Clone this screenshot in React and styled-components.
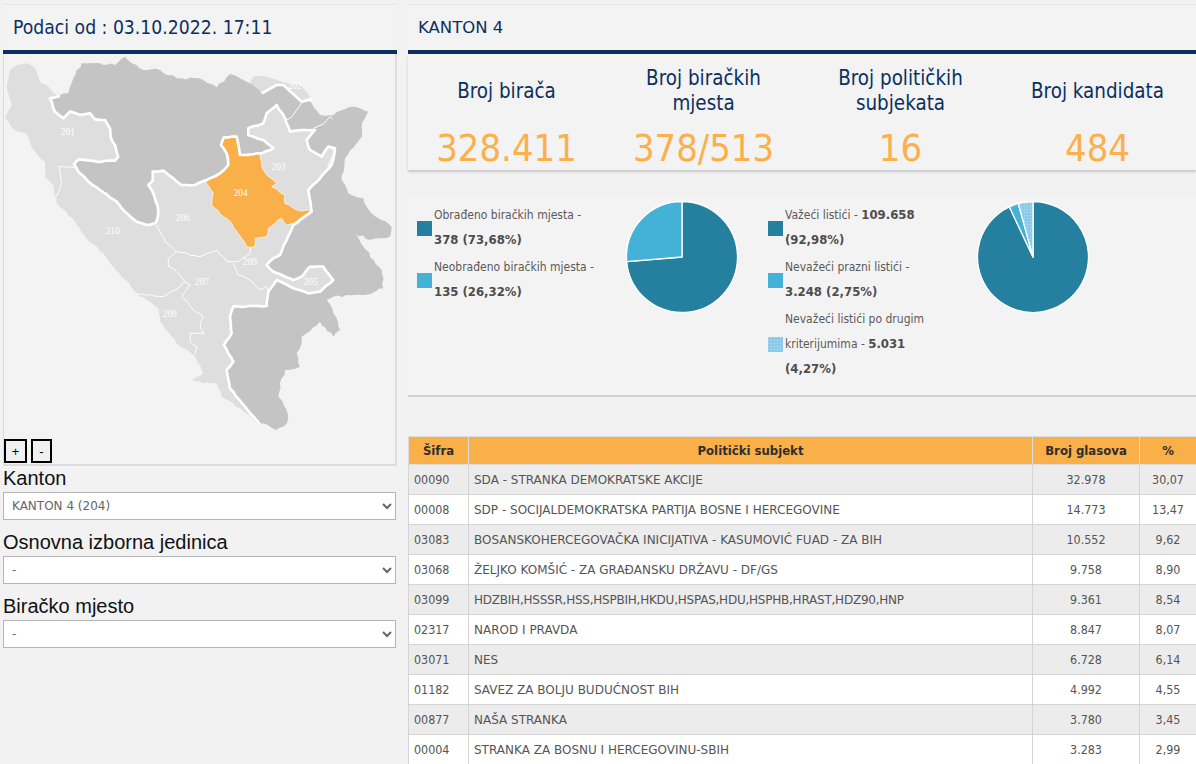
import React from "react";
import styled, { createGlobalStyle } from "styled-components";

const NAVY = "#0b3060";
const ORANGE = "#f9b048";
const TEAL = "#24809e";
const BLUE = "#44b2d6";
const SKY = "#8ccaea";

const GlobalStyle = createGlobalStyle`
  html, body {
    margin: 0;
    padding: 0;
    height: 764px;
    overflow: hidden;
    background: #f2f2f2;
  }
  * { box-sizing: border-box; }
`;

const Page = styled.div`
  display: flex;
  gap: 11px;
  padding: 4px 0 0 3px;
  width: 1196px;
  height: 764px;
  overflow: hidden;
  font-family: "DejaVu Sans", sans-serif;
  font-stretch: condensed;
`;

const LeftColumn = styled.div`
  width: 394px;
  flex: none;
`;

const RightColumn = styled.div`
  width: 788px;
  flex: none;
`;

const TitleBar = styled.div`
  height: 50px;
  display: flex;
  align-items: center;
  padding: 0 ${(p) => p.$pad}px 1px;
  background: #f3f3f3;
  border-top: 1px solid #e6e6e6;
  border-bottom: 4px solid ${NAVY};
  color: ${NAVY};
  font-size: ${(p) => p.$size}px;
  font-stretch: ${(p) => (p.$wide ? "normal" : "condensed")};
`;

const MapPanel = styled.div`
  position: relative;
  height: 412px;
  background: #f3f3f3;
  border: 1px solid #dcdcdc;
  border-width: 0 2px 2px 1px;
`;

const MapSvg = styled.svg`
  display: block;
  width: 391px;
  height: 410px;
`;

const RegionLabel = styled.text`
  font-family: "Liberation Serif", serif;
  font-size: 28px;
  fill: #fff;
  text-anchor: middle;
`;

const ZoomButtons = styled.div`
  position: absolute;
  left: 0;
  bottom: 1px;
  display: flex;
  gap: 4px;
`;

const ZoomButton = styled.button`
  width: ${(p) => p.$w}px;
  height: 24px;
  padding: 0;
  border: 2px solid #000;
  background: #f0f0f0;
  color: #000;
  font-family: "Liberation Sans", sans-serif;
  font-size: 13px;
`;

const FieldLabel = styled.label`
  display: block;
  height: ${(p) => (p.$first ? 26 : 36)}px;
  padding-top: ${(p) => (p.$first ? 0 : 10)}px;
  font-family: "Liberation Sans", sans-serif;
  font-size: 20px;
  line-height: 25px;
  font-stretch: normal;
  color: #111;
`;

const Select = styled.select`
  display: block;
  width: 393px;
  height: 28px;
  padding: 0 4px;
  background: #fff;
  border: 1px solid #b4b4b4;
  color: #666;
  font-family: inherit;
  font-stretch: normal;
  font-size: 12px;
`;

const StatsPanel = styled.div`
  height: 116px;
  display: grid;
  grid-template-columns: repeat(4, 1fr);
  background: #f3f3f3;
  box-shadow: 0 2px 2px #c8c8c8;
`;

const Stat = styled.div`
  display: flex;
  flex-direction: column;
  align-items: center;
`;

const StatLabel = styled.div`
  height: 66px;
  padding-top: 8px;
  display: flex;
  align-items: center;
  text-align: center;
  color: ${NAVY};
  font-size: 20.4px;
  line-height: 25px;
`;

const StatValue = styled.div`
  color: #fbb04c;
  font-size: 37.8px;
  line-height: 46px;
  margin-top: 5px;
`;

const ChartPanel = styled.div`
  margin-top: 23px;
  height: 204px;
  display: flex;
  padding: 9px 0 0 9px;
  background: #f3f3f3;
  border-top: 1px solid #ececec;
  border-bottom: 2px solid #d2d2d2;
`;

const ChartGroup = styled.div`
  width: 351px;
  flex: none;
  display: flex;
`;

const Legend = styled.div`
  width: 208px;
  flex: none;
`;

const LegendItem = styled.div`
  display: flex;
  align-items: center;
  gap: 2px;
  margin-bottom: 2px;
  color: #5a5a5a;
  font-size: 12px;
  line-height: 25px;

  b {
    color: #4d4d4d;
    font-size: 13px;
    line-height: 1;
  }
`;

const Swatch = styled.svg`
  width: 15px;
  height: 15px;
  flex: none;
`;

const PieSvg = styled.svg`
  width: 114px;
  height: 114px;
  flex: none;
  display: block;
  margin-top: -3px;
`;

const ResultsTable = styled.table`
  margin-top: 39px;
  width: 788px;
  table-layout: fixed;
  border-collapse: collapse;
`;

const HeadCell = styled.th`
  height: 28px;
  width: ${(p) => p.$w}px;
  padding: 0;
  background: ${ORANGE};
  border: 1px solid #dcdcdc;
  color: #2e2e2e;
  font-size: 13px;
  font-weight: bold;
  text-align: center;
`;

const Row = styled.tr`
  background: ${(p) => (p.$odd ? "#ececec" : "#fff")};
`;

const Cell = styled.td`
  height: 30px;
  padding: 0 5px;
  border: 1px solid #d4d4d4;
  color: #555;
  font-size: 12.4px;
  white-space: nowrap;
  overflow: hidden;
  text-align: ${(p) => (p.$center ? "center" : "left")};
`;

const NameCell = styled(Cell)`
  font-size: 12px;
  font-stretch: normal;
  letter-spacing: ${(p) => (p.$tight ? "-0.23px" : "0")};
`;

// map outlines are hand traced, roughen() gives them the jagged edge of the original
const roughen = (points, amp, seed = 7) => {
  let s = seed;
  const next = () => {
    s = (s * 9301 + 49297) % 233280;
    return s / 233280 - 0.5;
  };
  const pts = points.trim().split(/\s+/).map((p) => p.split(",").map(Number));
  const out = [];
  pts.forEach(([x, y], i) => {
    out.push(`${x},${y}`);
    if (i === pts.length - 1) return;
    const [nx, ny] = pts[i + 1];
    const len = Math.hypot(nx - x, ny - y);
    const steps = Math.floor(len / 12);
    for (let k = 1; k < steps; k++) {
      const t = k / steps;
      const off = next() * 2 * amp;
      const px = x + (nx - x) * t - ((ny - y) / len) * off;
      const py = y + (ny - y) * t + ((nx - x) / len) * off;
      out.push(`${px.toFixed(1)},${py.toFixed(1)}`);
    }
  });
  return out.join(" ");
};

const DARK = roughen("150,145 205,130 220,85 245,40 285,40 345,45 375,20 395,40 430,60 480,60 530,85 600,85 650,112 690,72 720,85 750,100 785,130 830,105 850,105 905,155 925,150 960,195 1000,195 1050,170 1105,185 1085,230 1085,260 1035,325 1025,390 1045,430 1090,445 1115,490 1175,530 1170,560 1110,570 1065,550 1090,590 1145,660 1150,715 1090,735 1000,740 980,750 1000,790 1020,840 1000,860 960,815 905,860 905,880 890,910 900,950 855,960 840,1000 835,1040 860,1080 865,1105 850,1130 828,1140 790,1120", 4);

const BORDER = roughen("780,1122 735,1070 690,1015 680,960 700,935 672,885 695,850 690,800 700,770 760,768 800,768 805,725 830,690 870,710 925,730 960,725 1000,690 970,650 930,650 905,680 880,690 820,665 800,645 820,625 840,615 860,570 880,525 935,485 925,420 960,385 995,345 1005,295 985,290 965,320 930,300 920,270 945,240 905,240 870,245 855,205 830,165 800,190 790,220 745,235 745,255 790,270 820,295 785,310 720,315 710,260 672,262 663,285 680,310 685,345 660,370 620,390 585,405 545,405 520,385 490,362 458,365 458,392 445,405 455,420 472,465 475,490 468,518 440,525 410,515 375,485 350,455 300,420 265,395 235,365 222,342 235,328 290,335 345,332 355,320 345,285 332,262 330,235 315,210 285,208 270,190 240,195 210,185 190,205 165,185 150,145 180,138", 1.5);

const LIGHT = roughen("30,60 50,45 80,40 105,55 120,95 150,115 170,135 205,130 300,200 600,300 700,200 760,80 790,78 830,90 860,100 900,105 930,140 905,155 1000,300 940,480 1000,690 960,730 800,780 780,1125 720,1075 665,1040 650,1000 610,1000 575,990 610,970 580,915 530,880 480,815 475,775 440,750 410,730 340,650 310,610 260,565 225,515 170,460 160,405 135,380 135,335 100,300 80,250 45,240 15,205 35,160 20,110", 3);

const BRCKO = "760,80 790,78 830,90 860,100 900,105 930,140 905,155 850,105 830,105 785,130";
const BRCKO_BORDER = "785,130 830,105 850,105 905,155 935,148";

const CANTON = roughen("615,392 660,370 685,345 680,310 663,285 672,262 710,260 720,315 780,310 785,350 800,375 830,400 815,410 855,435 855,460 890,480 935,483 880,520 860,525 845,505 825,520 805,535 800,560 765,565 765,590 740,590 725,565 695,520 670,500 635,465 640,430", 2.5);

const THIN_LINES = [
  "222,352 175,350 185,400 168,440",
  "470,525 495,575 530,605 600,620 650,600 680,635 715,635 750,610 752,590",
  "530,605 505,625 505,650 530,665 555,695 525,720 490,740 440,735 410,732",
  "555,695 570,705 545,740 585,785 610,800 600,830 612,850 570,850 570,875 590,890 585,915",
  "700,640 715,675 750,690 780,720 800,710 805,725",
  "905,158 880,195 860,210",
  "940,235 970,222 990,200 998,207",
].map((line) => roughen(line, 2.5));

const LABELS = [
  ["201", 204, 254], ["202", 884, 118], ["203", 836, 359], ["204", 722, 437],
  ["205", 932, 704], ["206", 549, 512], ["207", 606, 704], ["208", 510, 800],
  ["209", 750, 646], ["210", 338, 551],
];

const Map = () => (
  <MapSvg viewBox="12 12 1173 1230" aria-label="Mapa">
    <polygon points={LIGHT} fill="#dedede" />
    <polygon points={`${DARK} ${BORDER}`} fill="#c4c4c4" />
    <polygon points={BRCKO} fill="#dedede" />
    {THIN_LINES.map((pts) => (
      <polyline key={pts} points={pts} fill="none" stroke="#fff" strokeWidth="3" />
    ))}
    <polygon points={CANTON} fill={ORANGE} stroke="#fff" strokeWidth="2" />
    <polyline points={BORDER} fill="none" stroke="#fff" strokeWidth="8" strokeLinejoin="round" />
    <polyline points={BRCKO_BORDER} fill="none" stroke="#fff" strokeWidth="8" strokeLinejoin="round" />
    {LABELS.map(([text, x, y]) => (
      <RegionLabel key={text} x={x} y={y}>{text}</RegionLabel>
    ))}
  </MapSvg>
);

const DotPattern = ({ id }) => (
  <pattern id={id} width="3" height="3" patternUnits="userSpaceOnUse">
    <rect width="3" height="3" fill={SKY} />
    <rect width="1" height="1" fill="#b9def2" />
  </pattern>
);

// slices go clockwise from twelve o'clock, share in percent
const slicePath = (cx, cy, r, from, to) => {
  const point = (share) => {
    const a = (share / 100) * 2 * Math.PI;
    return `${(cx + r * Math.sin(a)).toFixed(2)} ${(cy - r * Math.cos(a)).toFixed(2)}`;
  };
  const large = to - from > 50 ? 1 : 0;
  return `M${cx} ${cy}L${point(from)}A${r} ${r} 0 ${large} 1 ${point(to)}Z`;
};

const Pie = ({ id, slices }) => {
  let start = 0;
  return (
    <PieSvg viewBox="0 0 114 114">
      <defs><DotPattern id={id} /></defs>
      <circle cx="57" cy="57" r="56" fill="#fff" />
      {slices.map(([share, fill]) => {
        const d = slicePath(57, 57, 55.5, start, start + share);
        start += share;
        return (
          <path
            key={fill}
            d={d}
            fill={fill === "dots" ? `url(#${id})` : fill}
            stroke="#fff"
            strokeWidth="1.3"
            strokeLinejoin="round"
          />
        );
      })}
    </PieSvg>
  );
};

const LegendEntry = ({ color, children }) => (
  <LegendItem>
    <Swatch viewBox="0 0 15 15">
      <defs><DotPattern id="swatch-dots" /></defs>
      <rect width="15" height="15" fill={color === "dots" ? "url(#swatch-dots)" : color} />
    </Swatch>
    <div>{children}</div>
  </LegendItem>
);

const STATS = [
  [["Broj birača"], "328.411"],
  [["Broj biračkih", "mjesta"], "378/513"],
  [["Broj političkih", "subjekata"], "16"],
  [["Broj kandidata"], "484"],
];

const PARTIES = [
  ["00090", "SDA - STRANKA DEMOKRATSKE AKCIJE", "32.978", "30,07"],
  ["00008", "SDP - SOCIJALDEMOKRATSKA PARTIJA BOSNE I HERCEGOVINE", "14.773", "13,47"],
  ["03083", "BOSANSKOHERCEGOVAČKA INICIJATIVA - KASUMOVIĆ FUAD - ZA BIH", "10.552", "9,62"],
  ["03068", "ŽELJKO KOMŠIĆ - ZA GRAĐANSKU DRŽAVU - DF/GS", "9.758", "8,90"],
  ["03099", "HDZBIH,HSSSR,HSS,HSPBIH,HKDU,HSPAS,HDU,HSPHB,HRAST,HDZ90,HNP", "9.361", "8,54", true],
  ["02317", "NAROD I PRAVDA", "8.847", "8,07"],
  ["03071", "NES", "6.728", "6,14"],
  ["01182", "SAVEZ ZA BOLJU BUDUĆNOST BIH", "4.992", "4,55"],
  ["00877", "NAŠA STRANKA", "3.780", "3,45"],
  ["00004", "STRANKA ZA BOSNU I HERCEGOVINU-SBIH", "3.283", "2,99"],
];

const Field = ({ label, first, value }) => (
  <>
    <FieldLabel $first={first}>{label}</FieldLabel>
    <Select defaultValue={value}>
      <option>{value}</option>
    </Select>
  </>
);

export default function App() {
  return (
    <Page>
      <GlobalStyle />
      <LeftColumn>
        <TitleBar $size={19.2} $pad={10}>Podaci od : 03.10.2022. 17:11</TitleBar>
        <MapPanel>
          <Map />
          <ZoomButtons>
            <ZoomButton $w={23}>+</ZoomButton>
            <ZoomButton $w={21}>-</ZoomButton>
          </ZoomButtons>
        </MapPanel>
        <Field first label="Kanton" value="KANTON 4 (204)" />
        <Field label="Osnovna izborna jedinica" value="-" />
        <Field label="Biračko mjesto" value="-" />
      </LeftColumn>
      <RightColumn>
        <TitleBar $size={16.5} $pad={10} $wide>KANTON 4</TitleBar>
        <StatsPanel>
          {STATS.map(([label, value]) => (
            <Stat key={value}>
              <StatLabel>
                <div>{label.map((line) => <div key={line}>{line}</div>)}</div>
              </StatLabel>
              <StatValue>{value}</StatValue>
            </Stat>
          ))}
        </StatsPanel>
        <ChartPanel>
          <ChartGroup>
            <Legend>
              <LegendEntry color={TEAL}>Obrađeno biračkih mjesta -<br /><b>378 (73,68%)</b></LegendEntry>
              <LegendEntry color={BLUE}>Neobrađeno biračkih mjesta -<br /><b>135 (26,32%)</b></LegendEntry>
            </Legend>
            <Pie id="dots-a" slices={[[73.68, TEAL], [26.32, BLUE]]} />
          </ChartGroup>
          <ChartGroup>
            <Legend>
              <LegendEntry color={TEAL}>Važeći listići - <b>109.658</b><br /><b>(92,98%)</b></LegendEntry>
              <LegendEntry color={BLUE}>Nevažeći prazni listići -<br /><b>3.248 (2,75%)</b></LegendEntry>
              <LegendEntry color="dots">Nevažeći listići po drugim<br />kriterijumima - <b>5.031</b><br /><b>(4,27%)</b></LegendEntry>
            </Legend>
            <Pie id="dots-b" slices={[[92.98, TEAL], [2.75, BLUE], [4.27, "dots"]]} />
          </ChartGroup>
        </ChartPanel>
        <ResultsTable>
          <thead>
            <tr>
              <HeadCell $w={60}>Šifra</HeadCell>
              <HeadCell $w={564}>Politički subjekt</HeadCell>
              <HeadCell $w={107}>Broj glasova</HeadCell>
              <HeadCell $w={57}>%</HeadCell>
            </tr>
          </thead>
          <tbody>
            {PARTIES.map(([code, name, votes, share, tight], i) => (
              <Row key={code} $odd={i % 2 === 0}>
                <Cell>{code}</Cell>
                <NameCell $tight={tight}>{name}</NameCell>
                <Cell $center>{votes}</Cell>
                <Cell $center>{share}</Cell>
              </Row>
            ))}
          </tbody>
        </ResultsTable>
      </RightColumn>
    </Page>
  );
}
